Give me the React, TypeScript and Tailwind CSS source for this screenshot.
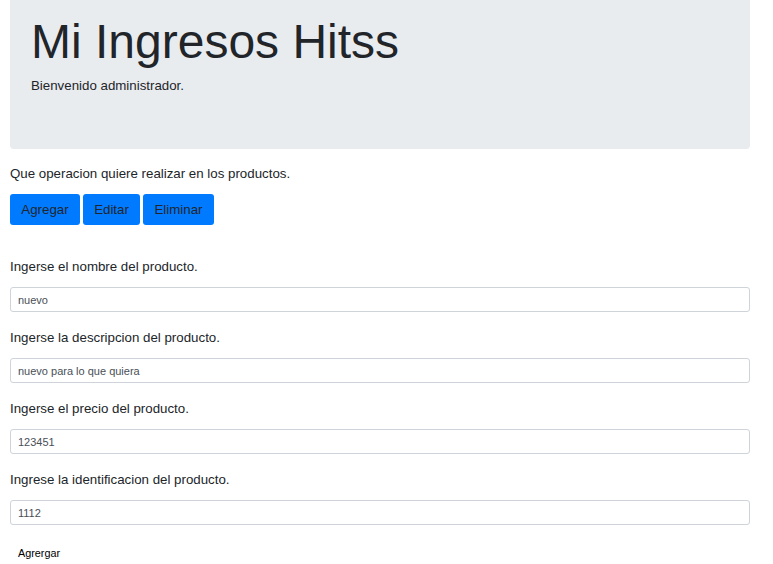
import React, { useState } from 'react';

const fields = [
  { label: 'Ingerse el nombre del producto.', value: 'nuevo' },
  { label: 'Ingerse la descripcion del producto.', value: 'nuevo para lo que quiera' },
  { label: 'Ingerse el precio del producto.', value: '123451' },
  { label: 'Ingrese la identificacion del producto.', value: '1112' },
];

const App: React.FC = () => {
  const [values, setValues] = useState(fields.map((f) => f.value));

  return (
    <div className="h-[564px] overflow-hidden bg-white pl-[10px] pr-[23px] text-[#212529] font-['Liberation_Sans',Arial,sans-serif]">
      {/* Jumbotron */}
      <div className="h-[149px] rounded-b-[4px] bg-[#e9ecef] px-[21px] pt-[13px]">
        <h1 className="text-[48px] font-light leading-[1.2]">Mi Ingresos Hitss</h1>
        <p className="mt-[5px] text-[13.3px] leading-[20px]">Bienvenido administrador.</p>
      </div>

      <p className="mt-[15px] text-[13.3px] leading-[20px]">Que operacion quiere realizar en los productos.</p>

      <div className="mt-[10px] flex gap-[3px]">
        <button className="h-[31px] w-[70px] rounded-[3px] bg-[#007bff] text-[13.3px] leading-[20px] text-[#212529]">
          Agregar
        </button>
        <button className="h-[31px] w-[57px] rounded-[3px] bg-[#007bff] text-[13.3px] leading-[20px] text-[#212529]">
          Editar
        </button>
        <button className="h-[31px] w-[71px] rounded-[3px] bg-[#007bff] text-[13.3px] leading-[20px] text-[#212529]">
          Eliminar
        </button>
      </div>

      <form className="mt-[32px] flex flex-col" onSubmit={(e) => e.preventDefault()}>
        {fields.map((f, i) => (
          <div key={f.label} className={i > 0 ? 'mt-[16px]' : ''}>
            <label className="block text-[13.3px] leading-[20px]">{f.label}</label>
            <input
              className="mt-[10px] block h-[25px] w-full rounded-[3px] border border-[#ced4da] bg-white px-[7px] text-[11px] text-[#495057] outline-none"
              value={values[i]}
              onChange={(e) => {
                const next = [...values];
                next[i] = e.target.value;
                setValues(next);
              }}
            />
          </div>
        ))}
        <div className="mt-[15px]">
          <button type="submit" className="px-[8px] text-[10.8px] leading-[16px] text-[#000]">
            Agrergar
          </button>
        </div>
      </form>
    </div>
  );
};

export default App;
